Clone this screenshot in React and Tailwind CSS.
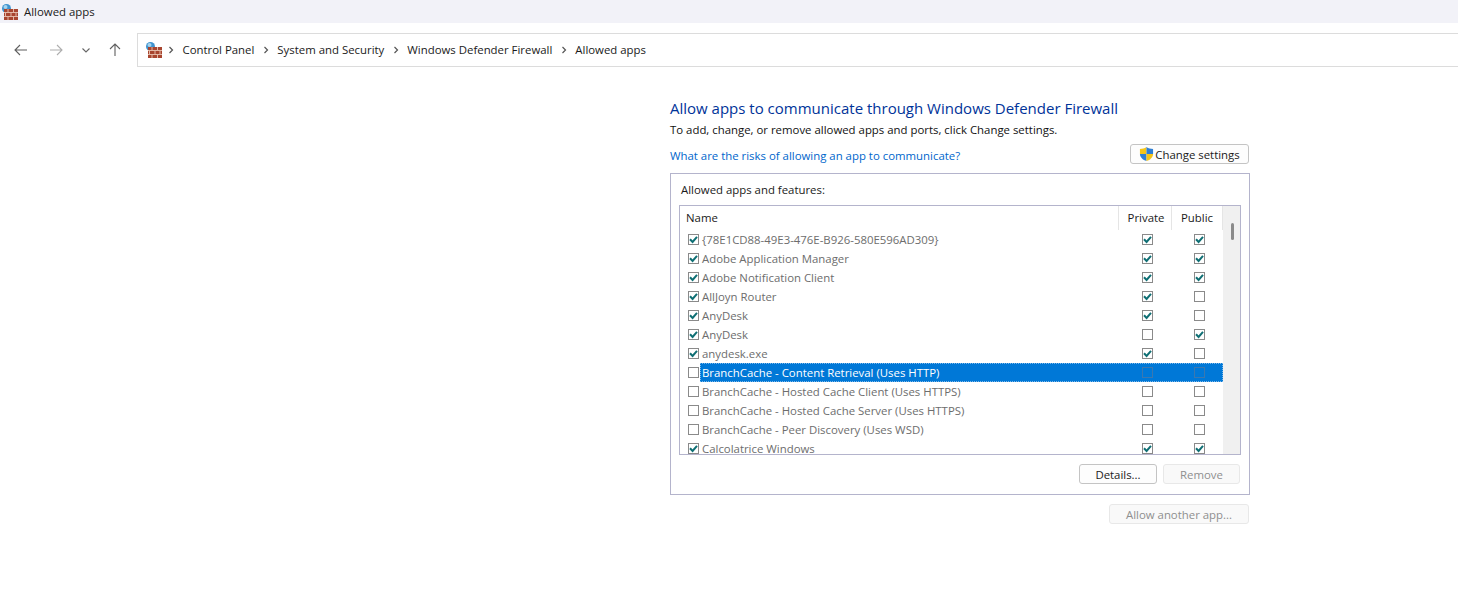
const rows = [
  ['{78E1CD88-49E3-476E-B926-580E596AD309}', true, true, true],
  ['Adobe Application Manager', true, true, true],
  ['Adobe Notification Client', true, true, true],
  ['AllJoyn Router', true, true, false],
  ['AnyDesk', true, true, false],
  ['AnyDesk', true, false, true],
  ['anydesk.exe', true, true, false],
  ['BranchCache - Content Retrieval (Uses HTTP)', false, false, false, true],
  ['BranchCache - Hosted Cache Client (Uses HTTPS)', false, false, false],
  ['BranchCache - Hosted Cache Server (Uses HTTPS)', false, false, false],
  ['BranchCache - Peer Discovery (Uses WSD)', false, false, false],
  ['Calcolatrice Windows', true, true, true],
]

function FirewallIcon({ className }) {
  return (
    <svg viewBox="0 0 16 16" className={className}>
      <circle cx="4.5" cy="4.5" r="4.5" fill="#3f93cf" />
      <circle cx="3.5" cy="3" r="2" fill="#a5d4ee" />
      <rect x="2" y="5" width="14" height="11" fill="#a8452f" />
      <path d="M2 8.5h14M2 12.5h14M6 5v3.5M11.5 5v3.5M3.5 8.5v4M9 8.5v4M14 8.5v4M6 12.5V16M11.5 12.5V16" stroke="#e3b8a6" strokeWidth="1" fill="none" />
    </svg>
  )
}

function ShieldIcon() {
  return (
    <svg viewBox="0 0 16 16" className="w-[15px] h-[16px] shrink-0 -mt-[3px]">
      <path d="M8 0.5 C6 2 3.5 2.6 1 2.6 V8 H8 Z" fill="#f5c518" />
      <path d="M8 0.5 C10 2 12.5 2.6 15 2.6 V8 H8 Z" fill="#2f7fd3" />
      <path d="M1 8 C1 11.5 4 14.2 8 15.5 V8 Z" fill="#2f7fd3" />
      <path d="M15 8 C15 11.5 12 14.2 8 15.5 V8 Z" fill="#f5c518" />
    </svg>
  )
}

function Check({ checked, dim }) {
  return (
    <span className={`w-[11px] h-[11px] border shrink-0 flex items-center justify-center ${dim ? 'border-[#3a78b0]' : 'border-[#8a8a8a]'}`}>
      {checked && (
        <svg viewBox="0 0 9 9" className="w-[9px] h-[9px]">
          <path d="M1 4.2 L3.6 7 L8 1.8" stroke="#0f6f74" strokeWidth="2" fill="none" />
        </svg>
      )}
    </span>
  )
}

function NavIcon({ d, className }) {
  return (
    <svg viewBox="0 0 16 16" className={`w-4 h-4 ${className}`} fill="none" stroke="currentColor" strokeWidth="1.1">
      <path d={d} />
    </svg>
  )
}

function Crumb({ children }) {
  return (
    <>
      <svg viewBox="0 0 6 8" className="w-[6px] h-2 mx-[6px] shrink-0" fill="none" stroke="#555" strokeWidth="1.2">
        <path d="M1.5 1 L4.5 4 L1.5 7" />
      </svg>
      <span className="px-[2.5px]">{children}</span>
    </>
  )
}

function Button({ children, disabled, className = '' }) {
  return (
    <div className={`h-5 pt-[2px] rounded-[3px] border flex items-center justify-center ${disabled ? 'border-[#e8e8e8] bg-[#f9f9f9] text-[#8f8f8f]' : 'border-[#c4c4c4] bg-[#fdfdfd] text-[#1a1a1a]'} ${className}`}>
      {children}
    </div>
  )
}

export default function App() {
  return (
    <div className="w-[1458px] h-[590px] bg-white overflow-hidden font-['Open_Sans','Noto_Sans',sans-serif] text-[11.4px] text-[#1a1a1a]">
      <div className="h-[23px] bg-[#f2f2f8] flex items-center pl-[2px]">
        <FirewallIcon className="w-4 h-4 mr-[6px]" />
        <span>Allowed apps</span>
      </div>

      <div className="h-[54px] pt-[10px] flex items-start">
        <div className="w-[137px] h-[34px] flex items-center pl-[13px]">
          <NavIcon d="M14 8H2M7 3L2 8l5 5" className="text-[#5f5f5f]" />
          <NavIcon d="M2 8h12M9 3l5 5-5 5" className="text-[#aeaeae] ml-[19px]" />
          <NavIcon d="M4.5 6.5L8 10l3.5-3.5" className="text-[#666] ml-[14px]" />
          <NavIcon d="M8 14V2M3 7l5-5 5 5" className="text-[#5f5f5f] ml-[13px]" />
        </div>
        <div className="flex-1 h-[34px] border border-r-0 border-[#dcdcdc] flex items-center pl-[8px]">
          <FirewallIcon className="w-4 h-4" />
          <Crumb>Control Panel</Crumb>
          <Crumb>System and Security</Crumb>
          <Crumb>Windows Defender Firewall</Crumb>
          <Crumb>Allowed apps</Crumb>
        </div>
      </div>

      <div className="ml-[670px] w-[580px] pt-[21px]">
        <h1 className="text-[15px] leading-5 font-normal text-[#003399]">Allow apps to communicate through Windows Defender Firewall</h1>
        <p className="mt-[3px] leading-[18px] text-[#111]">To add, change, or remove allowed apps and ports, click Change settings.</p>
        <div className="mt-[4px] h-[22px] flex items-center justify-between">
          <span className="pt-[3px] text-[#0066cc]">What are the risks of allowing an app to communicate?</span>
          <Button className="w-[119px] mr-px gap-px">
            <ShieldIcon />
            <span>Change settings</span>
          </Button>
        </div>

        <div className="mt-[8px] h-[322px] border border-[#b4b4cc] pt-[7px] px-2">
          <div className="h-[18px] pl-[2px] leading-[18px]">Allowed apps and features:</div>
          <div className="mt-[6px] w-[562px] h-[250px] border border-[#b4b4cc] flex overflow-hidden">
            <div className="flex-1 min-w-0">
              <div className="h-[24px] flex leading-[24px]">
                <div className="w-[439px] pl-[6px] border-r border-[#e5e5e5]">Name</div>
                <div className="w-[53px] pl-[2px] text-center border-r border-[#e5e5e5]">Private</div>
                <div className="flex-1 text-center border-r border-[#e5e5e5]">Public</div>
              </div>
              {rows.map(([name, on, priv, pub, selected], i) => (
                <div key={i} className="h-[19px] flex items-center text-[#6d6d6d]">
                  <div className="w-[20px] pl-[8px] shrink-0 flex">
                    <Check checked={on} />
                  </div>
                  <div className={`flex-1 h-full flex items-center ${selected ? 'bg-[#0078d7] text-white outline-1 outline-dotted outline-offset-[-1px] outline-[#7fb8e8]' : ''}`}>
                    <div className="w-[442px] pl-[2px] truncate">{name}</div>
                    <Check checked={priv} dim={selected} />
                    <div className="w-[41px]" />
                    <Check checked={pub} dim={selected} />
                  </div>
                </div>
              ))}
            </div>
            <div className="w-[17px] bg-[#f0f0f0] pt-[17px] pl-px flex justify-center shrink-0">
              <div className="w-[3px] h-[17px] rounded-full bg-[#8a8a8a]" />
            </div>
          </div>
          <div className="mt-[9px] flex justify-end pr-px gap-[6px]">
            <Button className="w-[78px]">Details...</Button>
            <Button disabled className="w-[77px]">Remove</Button>
          </div>
        </div>

        <div className="mt-[9px] flex justify-end pr-px">
          <Button disabled className="w-[140px]">Allow another app...</Button>
        </div>
      </div>
    </div>
  )
}
